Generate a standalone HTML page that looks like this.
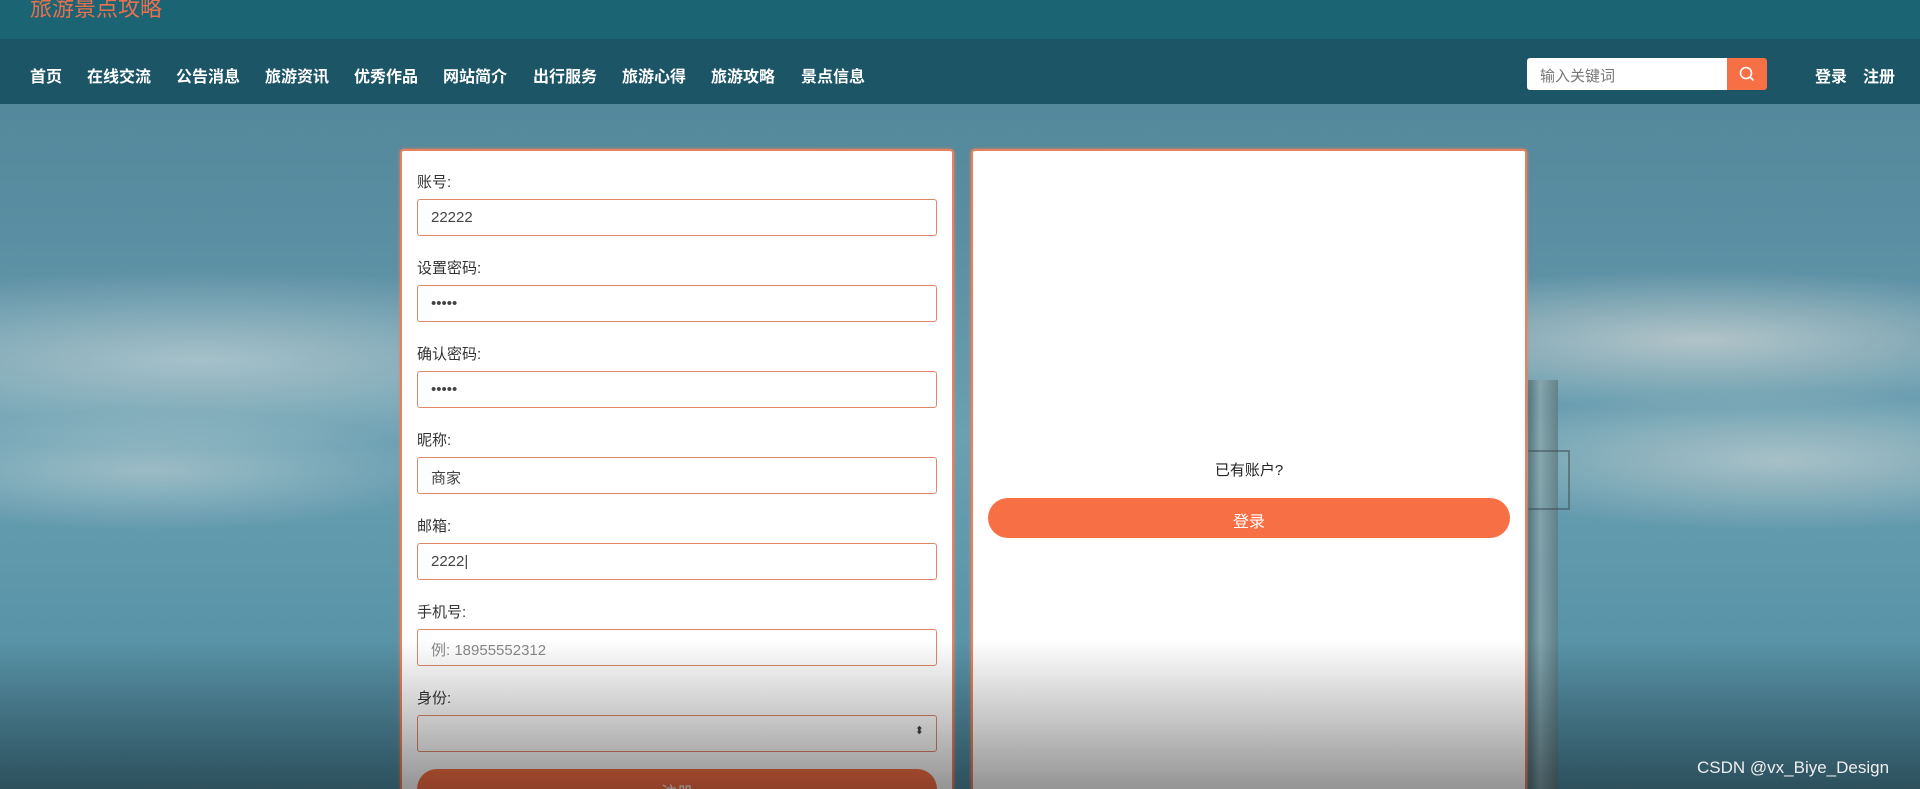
<!DOCTYPE html>
<html style="overflow:hidden;width:1920px;height:789px"><head><meta charset="utf-8"><style>
*{margin:0;padding:0;box-sizing:border-box}
body{width:1920px;height:789px;overflow:hidden;position:relative;font-family:"Liberation Sans","Noto Sans CJK SC",sans-serif;
background:radial-gradient(ellipse 500px 90px at 200px 360px,rgba(220,225,225,.55),transparent),
radial-gradient(ellipse 400px 70px at 1700px 340px,rgba(230,225,220,.6),transparent),
radial-gradient(ellipse 350px 70px at 1780px 460px,rgba(230,225,220,.5),transparent),
radial-gradient(ellipse 300px 60px at 150px 470px,rgba(220,225,225,.45),transparent),
linear-gradient(180deg,#4f8396 0%,#5a8ea2 30%,#6aa0b2 55%,#4d8aa0 100%)}
.top{position:absolute;left:0;top:0;width:1920px;height:39px;background:#1a6474}
.title{position:absolute;left:30px;top:-9px;color:#e8704e;font-size:22px}
.nav{position:absolute;left:0;top:39px;width:1920px;height:65px;background:#1b5566}
.nav a{position:absolute;top:24px;color:#fff;font-weight:bold;font-size:16px;text-decoration:none}
.search{position:absolute;left:1527px;top:58px;width:200px;height:32px;background:#fff;border-radius:3px 0 0 3px;font-size:15px;color:#777;padding:7px 0 0 13px}
.sbtn{position:absolute;left:1727px;top:58px;width:40px;height:32px;background:#f76f45;border-radius:0 3px 3px 0}
.panel{position:absolute;top:149px;height:640px;background:#fff;border:2px solid #e8825e;border-bottom:none;border-radius:4px 4px 0 0;box-shadow:0 0 3px #e8825e}
.lbl{position:absolute;left:15px;font-size:15px;color:#333}
.inp{position:absolute;left:15px;width:520px;height:37px;border:1.5px solid #e0876a;border-radius:3px;font-size:15px;color:#444;padding:9px 13px}
.btn{position:absolute;background:#f76f45;color:#fff;text-align:center;border-radius:20px;font-size:16px}
.shade{position:absolute;left:0;top:640px;width:1920px;height:149px;background:linear-gradient(180deg,rgba(0,0,0,0),rgba(0,0,0,.42))}
</style></head><body>
<div class="top"><div class="title">旅游景点攻略</div></div>
<div class="nav">
<a style="left:30px">首页</a><a style="left:87px">在线交流</a><a style="left:176px">公告消息</a><a style="left:265px">旅游资讯</a><a style="left:354px">优秀作品</a><a style="left:443px">网站简介</a><a style="left:533px">出行服务</a><a style="left:622px">旅游心得</a><a style="left:711px">旅游攻略</a><a style="left:801px">景点信息</a>
<a style="left:1815px">登录</a><a style="left:1863px">注册</a>
</div>
<div class="search">输入关键词</div>
<div class="sbtn"><svg width="40" height="32" viewBox="0 0 40 32"><circle cx="19" cy="15" r="5.5" fill="none" stroke="#fff" stroke-width="1.6"/><path d="M23 19l3.5 3.5" stroke="#fff" stroke-width="1.8"/></svg></div>
<div style="position:absolute;left:1528px;top:380px;width:30px;height:409px;background:linear-gradient(90deg,#4a6a72,#8aa5ab 40%,#5d7a80);opacity:.8"></div>
<div style="position:absolute;left:1528px;top:450px;width:42px;height:60px;border:2px solid #3a4a50;border-left:none;opacity:.5"></div>
<div class="panel" style="left:400px;width:554px">
<div class="lbl" style="top:20px">账号:</div><div class="inp" style="top:48px">22222</div>
<div class="lbl" style="top:106px">设置密码:</div><div class="inp" style="top:134px">•••••</div>
<div class="lbl" style="top:192px">确认密码:</div><div class="inp" style="top:220px">•••••</div>
<div class="lbl" style="top:278px">昵称:</div><div class="inp" style="top:306px">商家</div>
<div class="lbl" style="top:364px">邮箱:</div><div class="inp" style="top:392px">2222|</div>
<div class="lbl" style="top:450px">手机号:</div><div class="inp" style="top:478px;color:#888">例: 18955552312</div>
<div class="lbl" style="top:536px">身份:</div><div class="inp" style="top:564px"><span style="position:absolute;right:12px;top:8px;font-size:11px">⬍</span></div>
<div class="btn" style="left:15px;top:618px;width:520px;height:40px;padding-top:10px">注册</div>
</div>
<div class="panel" style="left:971px;width:556px">
<div style="position:absolute;left:0;width:552px;top:308px;text-align:center;font-size:15px;color:#222">已有账户?</div>
<div class="btn" style="left:15px;top:347px;width:522px;height:40px;padding-top:10px">登录</div>
</div>
<div class="shade"></div>
<div style="position:absolute;left:1697px;top:758px;color:#eee;font-size:17px">CSDN @vx_Biye_Design</div>
</body></html>
